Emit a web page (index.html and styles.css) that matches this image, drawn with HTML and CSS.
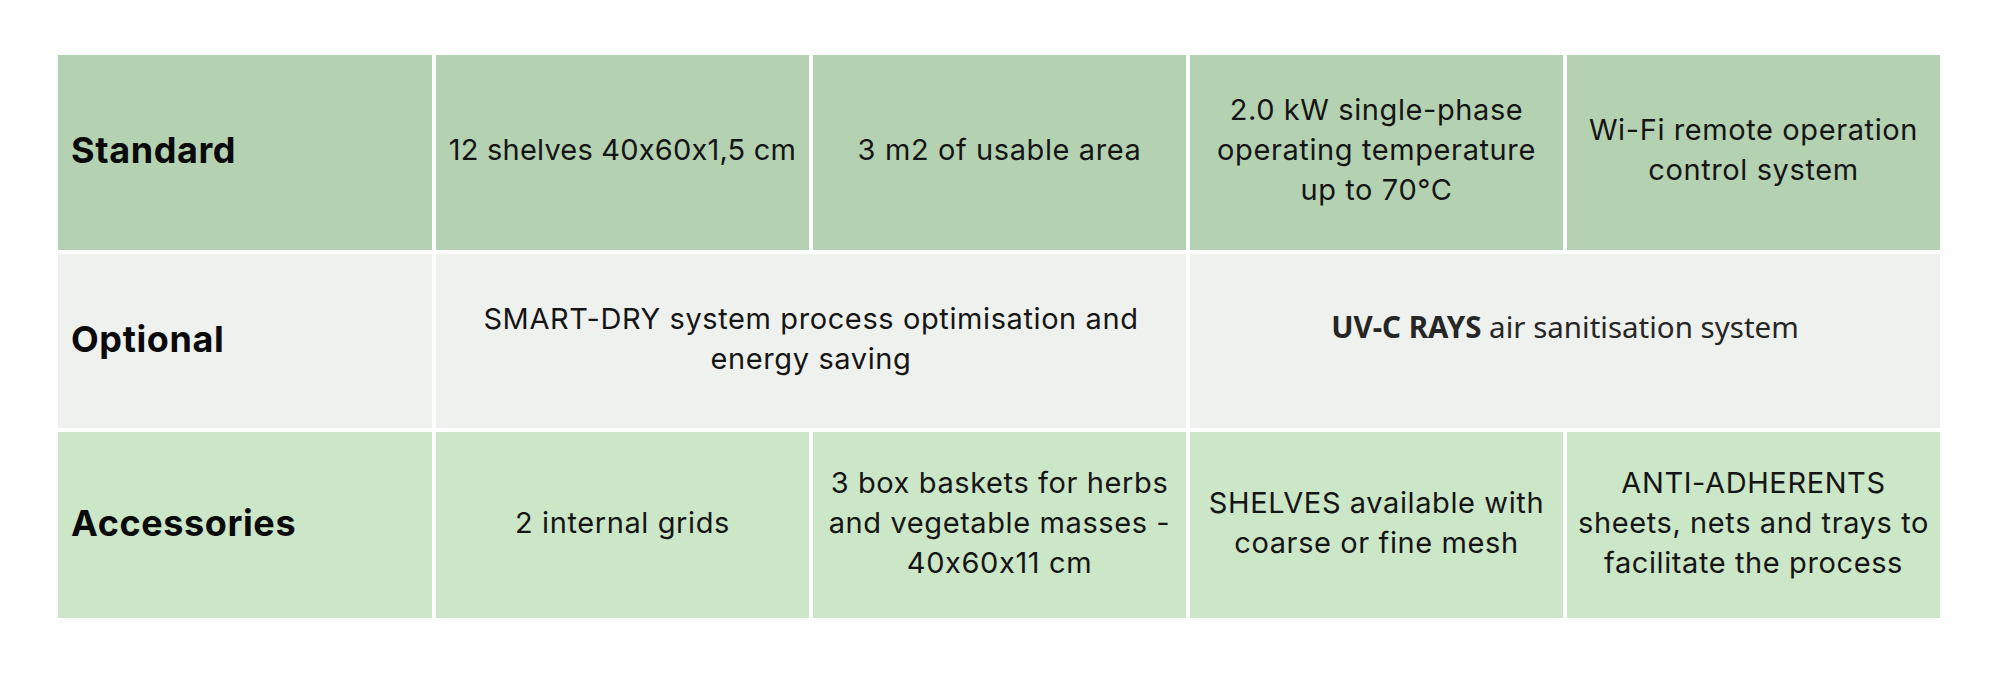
FILE: index.html
```html
<!DOCTYPE html>
<html lang="en">
<head>
<meta charset="utf-8">
<title>Specifications</title>
<link rel="stylesheet" href="styles.css">
</head>
<body>
<main class="page">
  <div class="spec-table">
    <div class="cell head row-std"><span>Standard</span></div>
    <div class="cell row-std"><span class="digits">12 shelves 40x60x1,5 cm</span></div>
    <div class="cell row-std"><span>3 m2 of usable area</span></div>
    <div class="cell row-std"><span>2.0 kW single-phase operating temperature up to 70°C</span></div>
    <div class="cell row-std"><span>Wi-Fi remote operation control system</span></div>

    <div class="cell head row-opt"><span>Optional</span></div>
    <div class="cell row-opt span2"><span>SMART-DRY system process optimisation and energy saving</span></div>
    <div class="cell row-opt span2 alt-font"><span><strong>UV-C RAYS</strong> air sanitisation system</span></div>

    <div class="cell head row-acc"><span>Accessories</span></div>
    <div class="cell row-acc"><span>2 internal grids</span></div>
    <div class="cell row-acc"><span>3 box baskets for herbs and vegetable masses - 40x60x11 cm</span></div>
    <div class="cell row-acc"><span>SHELVES available with coarse or fine mesh</span></div>
    <div class="cell row-acc"><span>ANTI-ADHERENTS sheets, nets and trays to facilitate the process</span></div>
  </div>
</main>
</body>
</html>
```

FILE: styles.css
```css
html, body {
  margin: 0;
  padding: 0;
  background: #ffffff;
}

.page {
  padding: 55px 0 0 58px;
}

.spec-table {
  display: grid;
  grid-template-columns: 374px repeat(4, 373px);
  grid-template-rows: 195px 174px 186px;
  gap: 4px;
  font-family: Inter, "Noto Sans", sans-serif;
  font-feature-settings: "calt" 0;
  color: #151515;
}

.cell {
  display: flex;
  align-items: center;
  justify-content: center;
  text-align: center;
  padding: 0 8px 5px;
  font-size: 29px;
  font-weight: 400;
  letter-spacing: 0.6px;
  line-height: 40px;
  box-sizing: border-box;
}

.digits {
  letter-spacing: 0.2px;
}

.cell.head {
  justify-content: flex-start;
  text-align: left;
  padding-left: 13px;
  font-size: 36px;
  font-weight: 700;
  letter-spacing: 0.6px;
  color: #0a0a0a;
}

.span2 {
  grid-column: span 2;
}

.alt-font {
  font-family: "Noto Sans", sans-serif;
  font-size: 29.5px;
  letter-spacing: 0;
  color: #262626;
  padding-bottom: 28px;
}

.alt-font strong {
  font-weight: 700;
}

.row-std { background: #b4d1b1; }
.row-opt { background: #eff1ee; }
.row-acc { background: #cce6c8; }
```
